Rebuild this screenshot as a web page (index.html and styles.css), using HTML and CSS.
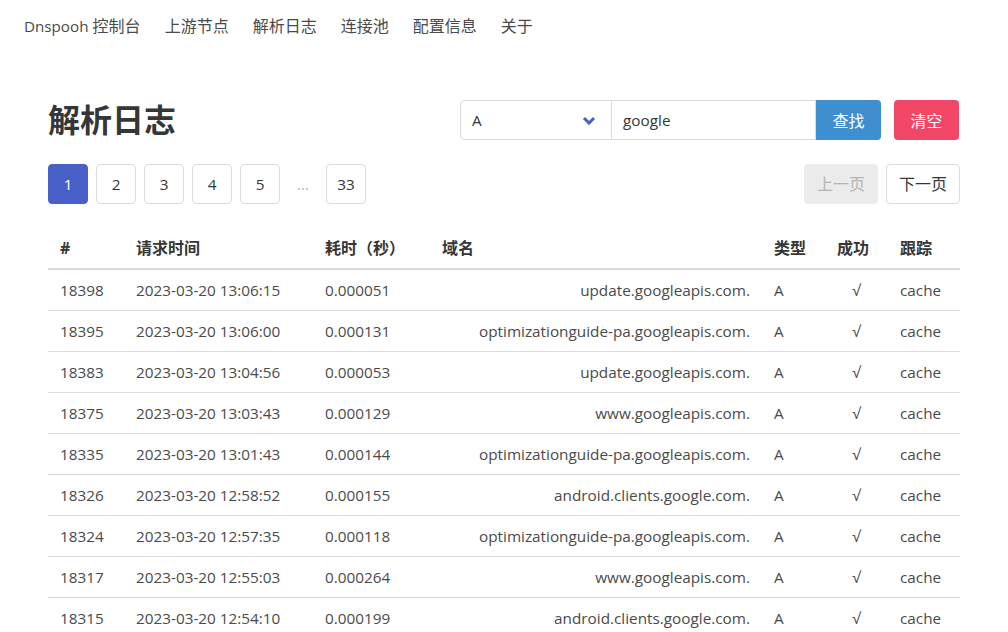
FILE: index.html
```html
<!DOCTYPE html>
<html lang="zh-CN">
<head>
<meta charset="utf-8">
<title>Dnspooh 控制台 - 解析日志</title>
<link rel="stylesheet" href="styles.css">
</head>
<body>
<nav class="navbar">
  <a class="nav-item"><span class="latin">Dnspooh</span>&nbsp;控制台</a>
  <a class="nav-item">上游节点</a>
  <a class="nav-item">解析日志</a>
  <a class="nav-item">连接池</a>
  <a class="nav-item">配置信息</a>
  <a class="nav-item">关于</a>
</nav>
<main class="section">
  <div class="title-row">
    <h1 class="title">解析日志</h1>
    <div class="search">
      <div class="field-group">
        <div class="select-box">
          <span class="select-value">A</span>
          <svg class="chevron" width="14" height="9" viewBox="0 0 14 9"><path d="M2 2 L7 7 L12 2" fill="none" stroke="#485fc7" stroke-width="3"/></svg>
        </div>
        <div class="input-box">google</div>
        <button class="btn btn-info">查找</button>
      </div>
      <button class="btn btn-danger">清空</button>
    </div>
  </div>
  <div class="pager-row">
    <ul class="pagination">
      <li class="page-link current">1</li>
      <li class="page-link">2</li>
      <li class="page-link">3</li>
      <li class="page-link">4</li>
      <li class="page-link">5</li>
      <li class="ellipsis">&hellip;</li>
      <li class="page-link">33</li>
    </ul>
    <div class="prev-next">
      <span class="page-btn disabled">上一页</span>
      <span class="page-btn">下一页</span>
    </div>
  </div>
  <table class="log-table">
    <colgroup>
      <col class="c-id"><col class="c-time"><col class="c-cost"><col class="c-domain"><col class="c-type"><col class="c-ok"><col class="c-trace">
    </colgroup>
    <thead>
      <tr><th>#</th><th>请求时间</th><th>耗时（秒）</th><th>域名</th><th>类型</th><th>成功</th><th>跟踪</th></tr>
    </thead>
    <tbody>
      <tr><td>18398</td><td>2023-03-20 13:06:15</td><td>0.000051</td><td class="r">update.googleapis.com.</td><td>A</td><td class="c">√</td><td>cache</td></tr>
      <tr><td>18395</td><td>2023-03-20 13:06:00</td><td>0.000131</td><td class="r">optimizationguide-pa.googleapis.com.</td><td>A</td><td class="c">√</td><td>cache</td></tr>
      <tr><td>18383</td><td>2023-03-20 13:04:56</td><td>0.000053</td><td class="r">update.googleapis.com.</td><td>A</td><td class="c">√</td><td>cache</td></tr>
      <tr><td>18375</td><td>2023-03-20 13:03:43</td><td>0.000129</td><td class="r">www.googleapis.com.</td><td>A</td><td class="c">√</td><td>cache</td></tr>
      <tr><td>18335</td><td>2023-03-20 13:01:43</td><td>0.000144</td><td class="r">optimizationguide-pa.googleapis.com.</td><td>A</td><td class="c">√</td><td>cache</td></tr>
      <tr><td>18326</td><td>2023-03-20 12:58:52</td><td>0.000155</td><td class="r">android.clients.google.com.</td><td>A</td><td class="c">√</td><td>cache</td></tr>
      <tr><td>18324</td><td>2023-03-20 12:57:35</td><td>0.000118</td><td class="r">optimizationguide-pa.googleapis.com.</td><td>A</td><td class="c">√</td><td>cache</td></tr>
      <tr><td>18317</td><td>2023-03-20 12:55:03</td><td>0.000264</td><td class="r">www.googleapis.com.</td><td>A</td><td class="c">√</td><td>cache</td></tr>
      <tr><td>18315</td><td>2023-03-20 12:54:10</td><td>0.000199</td><td class="r">android.clients.google.com.</td><td>A</td><td class="c">√</td><td>cache</td></tr>
    </tbody>
  </table>
</main>
</body>
</html>
```
FILE: styles.css
```css
html, body {
  margin: 0;
  padding: 0;
  background: #fff;
}
body {
  font-family: "Open Sans", "Noto Sans CJK SC", sans-serif;
  font-size: 16px;
  line-height: 1.5;
  color: #4a4a4a;
}
.navbar {
  display: flex;
  align-items: stretch;
  height: 52px;
  padding-left: 12px;
}
.nav-item {
  display: flex;
  align-items: center;
  padding: 0 12px;
  color: #4a4a4a;
  font-size: 16px;
  cursor: pointer;
}
.nav-item .latin {
  font-size: 15.2px;
}
.section {
  padding: 48px 48px 0;
}
.title-row {
  display: flex;
  align-items: center;
  justify-content: space-between;
  height: 40px;
}
.title {
  margin: 0;
  font-size: 32px;
  font-weight: 700;
  line-height: 1.125;
  color: #363636;
}
.search {
  display: flex;
  gap: 13px;
  margin-right: 1px;
}
.field-group {
  display: flex;
}
.select-box {
  box-sizing: border-box;
  width: 152px;
  height: 40px;
  border: 1px solid #dbdbdb;
  border-radius: 4px 0 0 4px;
  display: flex;
  align-items: center;
  justify-content: space-between;
  padding: 0 15px 0 11px;
  color: #363636;
  font-size: 15.3px;
}
.chevron {
  display: block;
}
.input-box {
  box-sizing: border-box;
  width: 204px;
  height: 40px;
  border: 1px solid #dbdbdb;
  border-left: none;
  display: flex;
  align-items: center;
  padding-left: 11px;
  color: #363636;
  font-size: 15.3px;
}
.btn {
  box-sizing: border-box;
  width: 65px;
  height: 40px;
  border: none;
  color: #fff;
  font-family: inherit;
  font-size: 16px;
  padding: 0;
  border-radius: 4px;
}
.btn-info {
  background: #3e8ed0;
  border-radius: 0 4px 4px 0;
}
.btn-danger {
  background: #f14668;
}
.pager-row {
  display: flex;
  justify-content: space-between;
  margin-top: 24px;
  height: 40px;
}
.pagination {
  display: flex;
  gap: 8px;
  list-style: none;
  margin: 0;
  padding: 0;
}
.page-link, .ellipsis {
  box-sizing: border-box;
  min-width: 40px;
  height: 40px;
  display: flex;
  align-items: center;
  justify-content: center;
  font-size: 15.3px;
  color: #363636;
}
.page-link {
  border: 1px solid #dbdbdb;
  border-radius: 4px;
}
.page-link.current {
  background: #485fc7;
  border-color: #485fc7;
  color: #fff;
}
.ellipsis {
  min-width: 30px;
  color: #b5b5b5;
}
.prev-next {
  display: flex;
  gap: 8px;
}
.page-btn {
  box-sizing: border-box;
  width: 74px;
  height: 40px;
  border: 1px solid #dbdbdb;
  border-radius: 4px;
  display: flex;
  align-items: center;
  justify-content: center;
  color: #363636;
}
.page-btn.disabled {
  background: #ebebeb;
  border-color: #ebebeb;
  color: #b5b5b5;
}
.log-table {
  margin-top: 24px;
  width: 912px;
  border-collapse: collapse;
  table-layout: fixed;
}
.c-id { width: 76px; }
.c-time { width: 189px; }
.c-cost { width: 117px; }
.c-domain { width: 332px; }
.c-type { width: 63px; }
.c-ok { width: 63px; }
.c-trace { width: 72px; }
.log-table th {
  text-align: left;
  font-weight: 700;
  color: #363636;
  padding: 8px 12px;
  border-bottom: 2px solid #dbdbdb;
  font-size: 16px;
}
.log-table td {
  padding: 8px 12px;
  border-bottom: 1px solid #dbdbdb;
  font-size: 15.3px;
  height: 24px;
  white-space: nowrap;
}
.log-table td.r { text-align: right; }
.log-table td.c { text-align: center; }
```
